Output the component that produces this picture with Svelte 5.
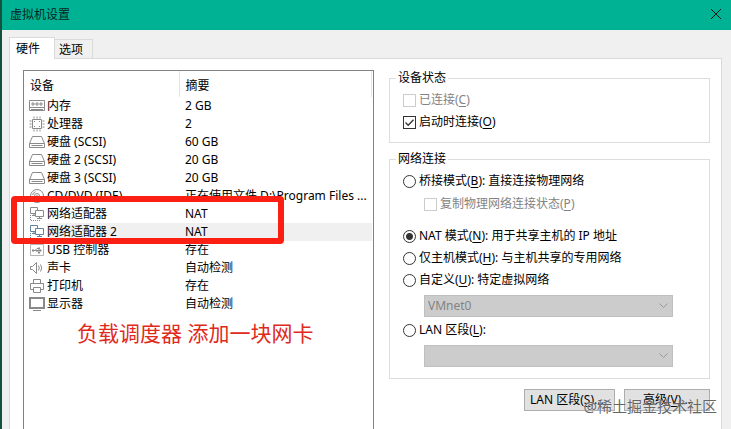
<script lang="ts">
  interface Device {
    icon: string;
    name: string;
    summary: string;
  }

  const devices: Device[] = [
    { icon: 'memory', name: '内存', summary: '2 GB' },
    { icon: 'cpu', name: '处理器', summary: '2' },
    { icon: 'disk', name: '硬盘 (SCSI)', summary: '60 GB' },
    { icon: 'disk', name: '硬盘 2 (SCSI)', summary: '20 GB' },
    { icon: 'disk', name: '硬盘 3 (SCSI)', summary: '20 GB' },
    { icon: 'cd', name: 'CD/DVD (IDE)', summary: '正在使用文件 D:\\Program Files ...' },
    { icon: 'network', name: '网络适配器', summary: 'NAT' },
    { icon: 'network', name: '网络适配器 2', summary: 'NAT' },
    { icon: 'usb', name: 'USB 控制器', summary: '存在' },
    { icon: 'sound', name: '声卡', summary: '自动检测' },
    { icon: 'printer', name: '打印机', summary: '存在' },
    { icon: 'display', name: '显示器', summary: '自动检测' }
  ];

  let selected = $state(7);
  let connection = $state('nat');
  let connectAtPowerOn = $state(true);
</script>

{#snippet deviceIcon(name: string)}
  <svg class="icon" viewBox="0 0 16 16" aria-hidden="true">
    {#if name === 'memory'}
      <path d="M.5 2.5h15v7H.5zM.5 9.5v3h15v-3M3 5h2v2H3zM7 5h2v2H7zM11 5h2v2h-2zM2 11.5h12" />
    {:else if name === 'cpu'}
      <path d="M3.5 3.5h9v9h-9zM5 .5v2M8 .5v2M11 .5v2M5 13.5v2M8 13.5v2M11 13.5v2M.5 5h2M.5 8h2M.5 11h2M13.5 5h2M13.5 8h2M13.5 11h2" />
      <path d="M5 5.5h1M10 5.5h1M5 10.5h1M10 10.5h1" />
    {:else if name === 'disk'}
      <path d="M3.5 2.5h9l3 7v4H.5v-4zM.5 9.5h15M2.5 11.5h11" />
    {:else if name === 'cd'}
      <circle cx="8" cy="8" r="6.5" />
      <circle cx="8" cy="8" r="2.5" />
      <circle cx="8" cy="8" r=".5" />
      <path d="M3.5 7a5 5 0 0 1 3-3.3M12.5 9a5 5 0 0 1-3 3.3" />
    {:else if name === 'network'}
      <path d="M1.5 1.5h7v6h-7zM5 7.5v2M3 9.5h3" />
      <path class="screen" d="M6.5 4.5h8v6h-8zM10.5 10.5v2M8 12.5h5" />
      <path class="dots" d="M1.5 9v5.5h10" />
    {:else if name === 'usb'}
      <path class="light" d="M1.5 2.5h13v11h-13z" />
      <path d="M4 8.5h8M6 8.5l2-2h2M7 8.5l2 2h1" />
      <path class="solid" d="M3 7.5h2v2H3zM9 5.5h2v2H9zM9 9.5h2v2H9zM11 7l2 1.5-2 1.5z" />
    {:else if name === 'sound'}
      <path d="M1.5 6.5h2l4-4v11l-4-4h-2zM9.5 5.5q1.5 2.5 0 5M11.5 4.5q2.5 3.5 0 7" />
    {:else if name === 'printer'}
      <path d="M4.5 5.5v-4h7v4M4.5 11.5h-3v-6h13v6h-3M4.5 9.5h7v5h-7z" />
    {:else}
      <path class="thick" d="M1 2h14v10H1z" />
      <path d="M4 14.5h8" />
    {/if}
  </svg>
{/snippet}

<div class="window">
  <header>
    <h1>虚拟机设置</h1>
    <button class="close" aria-label="关闭">
      <svg viewBox="0 0 10 10"><path d="M0 0l10 10M10 0L0 10" /></svg>
    </button>
  </header>

  <div class="tabs" role="tablist">
    <button class="tab active" role="tab" aria-selected="true">硬件</button>
    <button class="tab" role="tab" aria-selected="false">选项</button>
  </div>

  <main>
    <section class="devices">
      <table>
        <thead>
          <tr><th class="name">设备</th><th>摘要</th></tr>
        </thead>
        <tbody>
          {#each devices as device, i}
            <tr class:selected={selected === i} onclick={() => (selected = i)}>
              <td>
                <div class="device">
                  {@render deviceIcon(device.icon)}
                  <span>{device.name}</span>
                </div>
              </td>
              <td class="summary">{device.summary}</td>
            </tr>
          {/each}
        </tbody>
      </table>
      <div class="marker"></div>
      <p class="note">负载调度器 添加一块网卡</p>
    </section>

    <section class="settings">
      <fieldset>
        <legend>设备状态</legend>
        <label class="disabled"><input type="checkbox" disabled /><span>已连接(<u>C</u>)</span></label>
        <label><input type="checkbox" bind:checked={connectAtPowerOn} /><span>启动时连接(<u>O</u>)</span></label>
      </fieldset>

      <fieldset>
        <legend>网络连接</legend>
        <label><input type="radio" value="bridged" bind:group={connection} /><span>桥接模式(<u>B</u>): 直接连接物理网络</span></label>
        <label class="disabled nested"><input type="checkbox" disabled /><span>复制物理网络连接状态(<u>P</u>)</span></label>
        <label><input type="radio" value="nat" bind:group={connection} /><span>NAT 模式(<u>N</u>): 用于共享主机的 IP 地址</span></label>
        <label><input type="radio" value="host" bind:group={connection} /><span>仅主机模式(<u>H</u>): 与主机共享的专用网络</span></label>
        <label><input type="radio" value="custom" bind:group={connection} /><span>自定义(<u>U</u>): 特定虚拟网络</span></label>
        <select disabled aria-label="特定虚拟网络"><option>VMnet0</option></select>
        <label><input type="radio" value="lan" bind:group={connection} /><span>LAN 区段(<u>L</u>):</span></label>
        <select disabled aria-label="LAN 区段"><option></option></select>
      </fieldset>

      <div class="actions">
        <button>LAN 区段(<u>S</u>)...</button>
        <button>高级(<u>V</u>)...</button>
      </div>
    </section>
  </main>

  <div class="watermark">@稀土掘金技术社区</div>
</div>

<style>
  :global(body) {
    margin: 0;
    font: 12px/18px 'Noto Sans', 'Noto Sans CJK SC', sans-serif;
    color: #000;
  }

  * {
    box-sizing: border-box;
  }

  button,
  input,
  select {
    font: inherit;
    color: inherit;
    margin: 0;
  }

  u {
    text-underline-offset: 2px;
  }

  .window {
    position: relative;
    display: flex;
    flex-direction: column;
    min-height: 100vh;
    background: #f0f0f0;
    border-left: 2px solid #14513f;
    overflow: hidden;
  }

  header {
    display: flex;
    align-items: center;
    justify-content: space-between;
    height: 30px;
    padding: 0 10px 0 8px;
    background: #00b294;
  }

  h1 {
    margin: 0;
    font-size: 12px;
    font-weight: normal;
    color: #04241e;
  }

  .close {
    display: flex;
    padding: 0 0 2px;
    border: 0;
    background: none;
  }

  .close svg {
    width: 10px;
    height: 10px;
    overflow: visible;
    stroke: #0a1512;
  }

  .tabs {
    display: flex;
    align-items: flex-end;
    height: 28px;
    margin: 0 9px 0 7px;
  }

  .tab {
    width: 38px;
    height: 19px;
    padding: 1px 0 0 4px;
    line-height: 18px;
    text-align: left;
    background: #f0f0f0;
    border: 1px solid #dadada;
    border-width: 1px 1px 0 0;
  }

  .tab.active {
    position: relative;
    z-index: 1;
    width: 46px;
    height: 22px;
    margin-bottom: -1px;
    padding: 0 0 0 6px;
    border-left-width: 1px;
    background: #fff;
  }

  main {
    flex: 1;
    display: grid;
    grid-template-columns: minmax(0, 351fr) minmax(0, 321fr);
    gap: 15px;
    margin: 0 9px 0 7px;
    padding: 11px 11px 0 13px;
    background: #fff;
    border: 1px solid #dadada;
    border-bottom: 0;
  }

  .devices {
    position: relative;
    padding-right: 1px;
    border: 1px solid #828282;
    border-bottom: 0;
  }

  table {
    width: 100%;
    table-layout: fixed;
    border-collapse: collapse;
  }

  th {
    height: 26px;
    padding: 3px 6px 0;
    font-weight: normal;
    text-align: left;
    border-right: 1px solid #e5e5e5;
  }

  th.name {
    width: 155px;
  }

  td {
    height: 18px;
    padding: 0;
  }

  td.summary {
    padding-left: 6px;
    white-space: nowrap;
  }

  .device {
    display: flex;
    align-items: center;
    gap: 2px;
    padding-left: 5px;
    white-space: nowrap;
  }

  .device span {
    flex: 1;
  }

  .selected .device span,
  .selected .summary {
    background: #f0f0f0;
  }

  .icon {
    width: 16px;
    height: 16px;
    fill: none;
    stroke: #8a8a8a;
  }

  .icon .light {
    stroke: #b5b5b5;
  }

  .icon .solid {
    fill: #8a8a8a;
    stroke: none;
  }

  .icon .thick {
    stroke-width: 2;
  }

  .icon .screen {
    fill: #fff;
  }

  .icon .dots {
    stroke-dasharray: 1 1;
  }

  .selected .icon {
    stroke: #64809a;
  }

  .marker {
    position: absolute;
    top: 125px;
    left: -13px;
    width: 273px;
    height: 48px;
    border: 6px solid #fc2014;
    border-radius: 4px;
  }

  .note {
    position: absolute;
    top: 247px;
    left: 53px;
    margin: 0;
    font-size: 21px;
    line-height: 30px;
    color: #e02a1c;
    white-space: nowrap;
  }

  fieldset {
    min-width: 0;
    margin: 0 0 8px;
    padding: 3px 6px 9px;
    border: 1px solid #dcdcdc;
  }

  legend {
    padding: 0 2px;
    line-height: 16px;
  }

  label {
    display: flex;
    align-items: center;
    gap: 3px;
    height: 22px;
    padding-left: 7px;
    white-space: nowrap;
  }

  .disabled {
    color: #838383;
  }

  .nested {
    margin: 1px 0 10px 21px;
  }

  input {
    appearance: none;
    flex: none;
    width: 13px;
    height: 13px;
    background: #fff;
    border: 1px solid #333;
  }

  input:disabled {
    border-color: #ccc;
  }

  input[type='checkbox']:checked {
    background: url("data:image/svg+xml,%3Csvg xmlns='http://www.w3.org/2000/svg' viewBox='0 0 11 11'%3E%3Cpath d='M1.5 5.5l2.7 2.7L9.5 2.7' fill='none' stroke='%23333' stroke-width='1.3'/%3E%3C/svg%3E");
  }

  input[type='radio'] {
    border-radius: 50%;
  }

  input[type='radio']:checked {
    background: radial-gradient(circle, #333 3px, #fff 4px);
  }

  select {
    appearance: none;
    display: block;
    width: calc(100% - 58px);
    height: 22px;
    margin: 4px 0 2px 28px;
    padding: 0 3px;
    border: 1px solid #bfbfbf;
    border-radius: 0;
    background: #ccc url("data:image/svg+xml,%3Csvg xmlns='http://www.w3.org/2000/svg' width='9' height='6'%3E%3Cpath d='M.5 .5l4 4 4-4' fill='none' stroke='%23999'/%3E%3C/svg%3E") no-repeat right 4px center;
  }

  select:disabled {
    color: #838383;
    opacity: 1;
  }

  .actions {
    display: flex;
    justify-content: flex-end;
    gap: 9px;
    padding-top: 2px;
  }

  .actions button {
    width: 86px;
    height: 22px;
    padding: 0 5px;
    line-height: 18px;
    white-space: nowrap;
    background: #e1e1e1;
    border: 1px solid #adadad;
  }

  .actions button:first-child {
    width: 91px;
    text-align: left;
  }

  .watermark {
    position: absolute;
    right: 14px;
    bottom: 12px;
    font-size: 15px;
    line-height: 22px;
    color: #666;
    text-shadow: 0 0 1px #fff;
    white-space: nowrap;
  }
</style>
